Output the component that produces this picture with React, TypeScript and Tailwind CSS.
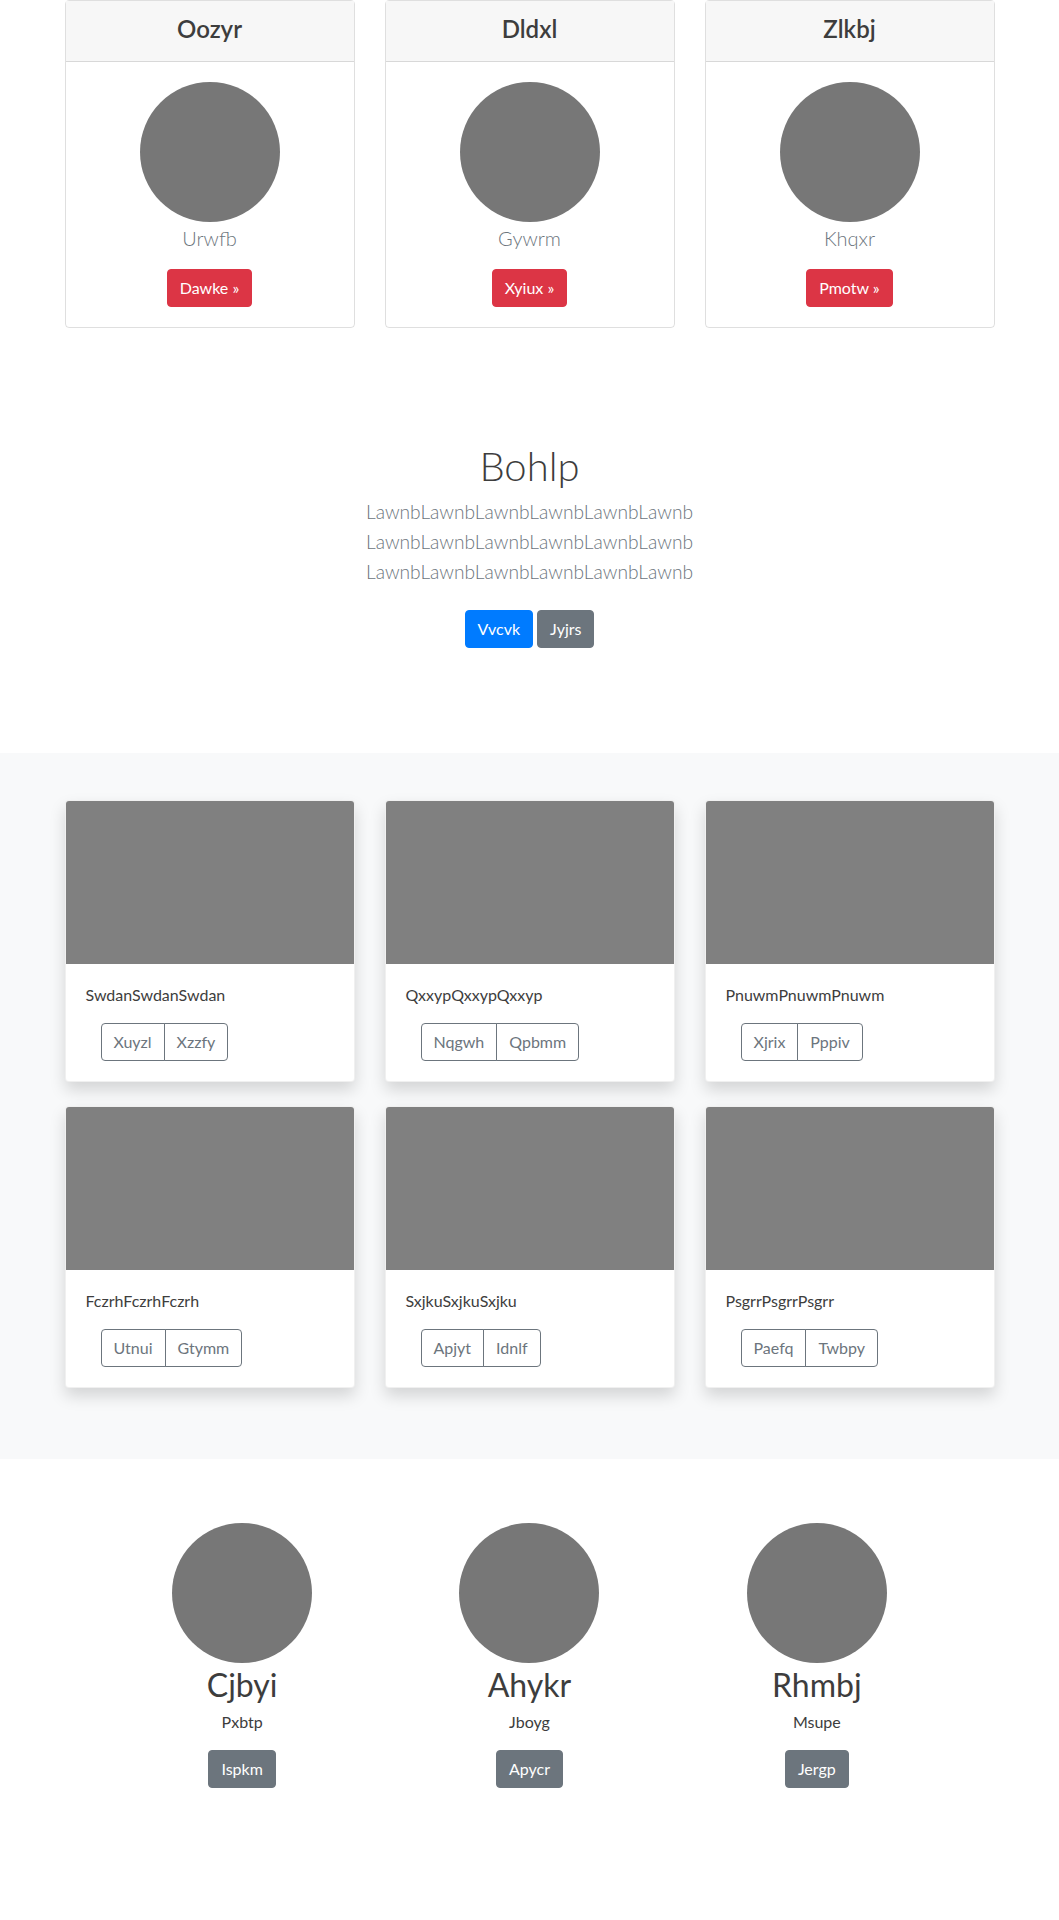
import React from 'react';

const font = "font-['Lato','Segoe_UI','Noto_Sans',sans-serif]";

const pricing = [
  { title: 'Oozyr', name: 'Urwfb', cta: 'Dawke »' },
  { title: 'Dldxl', name: 'Gywrm', cta: 'Xyiux »' },
  { title: 'Zlkbj', name: 'Khqxr', cta: 'Pmotw »' },
];

const albums = [
  { text: 'SwdanSwdanSwdan', a: 'Xuyzl', b: 'Xzzfy' },
  { text: 'QxxypQxxypQxxyp', a: 'Nqgwh', b: 'Qpbmm' },
  { text: 'PnuwmPnuwmPnuwm', a: 'Xjrix', b: 'Pppiv' },
  { text: 'FczrhFczrhFczrh', a: 'Utnui', b: 'Gtymm' },
  { text: 'SxjkuSxjkuSxjku', a: 'Apjyt', b: 'Idnlf' },
  { text: 'PsgrrPsgrrPsgrr', a: 'Paefq', b: 'Twbpy' },
];

const people = [
  { name: 'Cjbyi', role: 'Pxbtp', cta: 'Ispkm' },
  { name: 'Ahykr', role: 'Jboyg', cta: 'Apycr' },
  { name: 'Rhmbj', role: 'Msupe', cta: 'Jergp' },
];

export default function App() {
  return (
    <div className={`min-h-[1920px] bg-white text-[#212529] ${font}`}>
      {/* Pricing cards */}
      <section className="mx-auto w-[960px] px-[15px]">
        <div className="grid grid-cols-3 gap-[30px]">
          {pricing.map((p) => (
            <div
              key={p.title}
              className="rounded-[4px] border border-[rgba(0,0,0,0.125)] text-center"
            >
              <div className="flex h-[61px] items-center justify-center border-b border-[rgba(0,0,0,0.125)] bg-[#f7f7f7] pb-[5px]">
                <h4 className="text-[24px] font-semibold leading-[29px] text-[#3d3d3d]">
                  {p.title}
                </h4>
              </div>
              <div className="flex flex-col items-center p-5">
                <div className="h-[140px] w-[140px] rounded-full bg-[#777777]" />
                <p className="mt-px text-[20px] font-light leading-[30px] text-[#6c757d]">
                  {p.name}
                </p>
                <button className="mt-[16px] rounded-[4px] border border-[#dc3545] bg-[#dc3545] px-3 py-[6px] text-[16px] leading-6 text-white">
                  {p.cta}
                </button>
              </div>
            </div>
          ))}
        </div>
      </section>

      {/* Intro */}
      <section className="pb-[105px] pt-[114px] text-center">
        <h1 className="text-[40px] font-light leading-[48px] text-[#3d3d3d]">Bohlp</h1>
        <p className="mt-[7px] text-[19.2px] font-light leading-[30px] text-[#6c757d]">
          <span className="block">LawnbLawnbLawnbLawnbLawnbLawnb</span>
          <span className="block">LawnbLawnbLawnbLawnbLawnbLawnb</span>
          <span className="block">LawnbLawnbLawnbLawnbLawnbLawnb</span>
        </p>
        <div className="mt-[23px] flex justify-center gap-[4px]">
          <button className="rounded-[4px] border border-[#007bff] bg-[#007bff] px-3 py-[6px] text-[16px] leading-6 text-white">
            Vvcvk
          </button>
          <button className="rounded-[4px] border border-[#6c757d] bg-[#6c757d] px-3 py-[6px] text-[16px] leading-6 text-white">
            Jyjrs
          </button>
        </div>
      </section>

      {/* Album */}
      <section className="bg-[#f8f9fa] pb-[71px] pt-[47px]">
        <div className="mx-auto grid w-[930px] grid-cols-3 gap-x-[30px] gap-y-[24px]">
          {albums.map((a) => (
            <div
              key={a.text}
              className="overflow-hidden rounded-[4px] border border-[rgba(0,0,0,0.06)] bg-white shadow-[0_8px_16px_rgba(0,0,0,0.15)]"
            >
              <div className="h-[163px] bg-[#808080]" />
              <div className="px-5 pb-5 pt-[19px]">
                <p className="text-[16px] leading-6 text-[#3d3d3d]">{a.text}</p>
                <div className="ml-[15px] mt-4 inline-flex">
                  <button className="rounded-l-[4px] border border-[#6c757d] px-3 py-[6px] text-[16px] leading-6 text-[#6c757d]">
                    {a.a}
                  </button>
                  <button className="-ml-px rounded-r-[4px] border border-[#6c757d] px-3 py-[6px] text-[16px] leading-6 text-[#6c757d]">
                    {a.b}
                  </button>
                </div>
              </div>
            </div>
          ))}
        </div>
      </section>

      {/* Team */}
      <section className="pt-[64px]">
        <div className="mx-auto grid w-[862px] grid-cols-3 text-center">
          {people.map((m) => (
            <div key={m.name} className="flex flex-col items-center">
              <div className="h-[140px] w-[140px] rounded-full bg-[#777777]" />
              <h2 className="mt-[3px] text-[32px] leading-[38px] text-[#3d3d3d]">{m.name}</h2>
              <p className="mt-[6px] text-[16px] leading-6 text-[#3d3d3d]">{m.role}</p>
              <button className="mt-4 rounded-[4px] border border-[#6c757d] bg-[#6c757d] px-3 py-[6px] text-[16px] leading-6 text-white">
                {m.cta}
              </button>
            </div>
          ))}
        </div>
      </section>
    </div>
  );
}
